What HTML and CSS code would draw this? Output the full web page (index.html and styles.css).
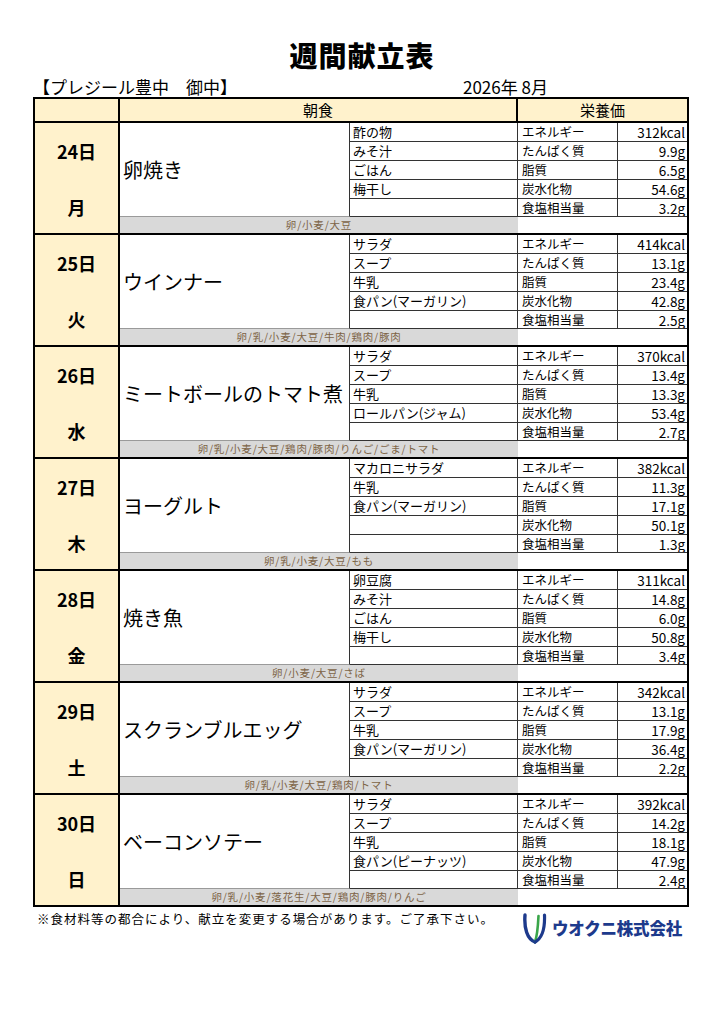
FILE: index.html
```html
<!DOCTYPE html>
<html lang="ja">
<head>
<meta charset="utf-8">
<title>週間献立表</title>
<link rel="stylesheet" href="styles.css">
</head>
<body>
<div class="page">
  <h1 class="title">週間献立表</h1>
  <div class="meta">
    <span class="client">【プレジール豊中　御中】</span>
    <span class="month">2026年 8月</span>
  </div>
  <div class="menu">
    <div class="head">
      <div class="h-date"></div>
      <div class="h-meal">朝食</div>
      <div class="h-nut">栄養価</div>
    </div>

    <div class="day">
      <div class="date"><span class="dnum">24日</span><span class="wday">月</span></div>
      <div class="main">卵焼き</div>
      <div class="side">酢の物</div><div class="nn">エネルギー</div><div class="nv">312kcal</div>
      <div class="side">みそ汁</div><div class="nn">たんぱく質</div><div class="nv">9.9g</div>
      <div class="side">ごはん</div><div class="nn">脂質</div><div class="nv">6.5g</div>
      <div class="side">梅干し</div><div class="nn">炭水化物</div><div class="nv">54.6g</div>
      <div class="side"></div><div class="nn">食塩相当量</div><div class="nv">3.2g</div>
      <div class="allergy">卵/小麦/大豆</div>
    </div>

    <div class="day">
      <div class="date"><span class="dnum">25日</span><span class="wday">火</span></div>
      <div class="main">ウインナー</div>
      <div class="side">サラダ</div><div class="nn">エネルギー</div><div class="nv">414kcal</div>
      <div class="side">スープ</div><div class="nn">たんぱく質</div><div class="nv">13.1g</div>
      <div class="side">牛乳</div><div class="nn">脂質</div><div class="nv">23.4g</div>
      <div class="side">食パン(マーガリン)</div><div class="nn">炭水化物</div><div class="nv">42.8g</div>
      <div class="side"></div><div class="nn">食塩相当量</div><div class="nv">2.5g</div>
      <div class="allergy">卵/乳/小麦/大豆/牛肉/鶏肉/豚肉</div>
    </div>

    <div class="day">
      <div class="date"><span class="dnum">26日</span><span class="wday">水</span></div>
      <div class="main">ミートボールのトマト煮</div>
      <div class="side">サラダ</div><div class="nn">エネルギー</div><div class="nv">370kcal</div>
      <div class="side">スープ</div><div class="nn">たんぱく質</div><div class="nv">13.4g</div>
      <div class="side">牛乳</div><div class="nn">脂質</div><div class="nv">13.3g</div>
      <div class="side">ロールパン(ジャム)</div><div class="nn">炭水化物</div><div class="nv">53.4g</div>
      <div class="side"></div><div class="nn">食塩相当量</div><div class="nv">2.7g</div>
      <div class="allergy">卵/乳/小麦/大豆/鶏肉/豚肉/りんご/ごま/トマト</div>
    </div>

    <div class="day">
      <div class="date"><span class="dnum">27日</span><span class="wday">木</span></div>
      <div class="main">ヨーグルト</div>
      <div class="side">マカロニサラダ</div><div class="nn">エネルギー</div><div class="nv">382kcal</div>
      <div class="side">牛乳</div><div class="nn">たんぱく質</div><div class="nv">11.3g</div>
      <div class="side">食パン(マーガリン)</div><div class="nn">脂質</div><div class="nv">17.1g</div>
      <div class="side"></div><div class="nn">炭水化物</div><div class="nv">50.1g</div>
      <div class="side"></div><div class="nn">食塩相当量</div><div class="nv">1.3g</div>
      <div class="allergy">卵/乳/小麦/大豆/もも</div>
    </div>

    <div class="day">
      <div class="date"><span class="dnum">28日</span><span class="wday">金</span></div>
      <div class="main">焼き魚</div>
      <div class="side">卵豆腐</div><div class="nn">エネルギー</div><div class="nv">311kcal</div>
      <div class="side">みそ汁</div><div class="nn">たんぱく質</div><div class="nv">14.8g</div>
      <div class="side">ごはん</div><div class="nn">脂質</div><div class="nv">6.0g</div>
      <div class="side">梅干し</div><div class="nn">炭水化物</div><div class="nv">50.8g</div>
      <div class="side"></div><div class="nn">食塩相当量</div><div class="nv">3.4g</div>
      <div class="allergy">卵/小麦/大豆/さば</div>
    </div>

    <div class="day">
      <div class="date"><span class="dnum">29日</span><span class="wday">土</span></div>
      <div class="main">スクランブルエッグ</div>
      <div class="side">サラダ</div><div class="nn">エネルギー</div><div class="nv">342kcal</div>
      <div class="side">スープ</div><div class="nn">たんぱく質</div><div class="nv">13.1g</div>
      <div class="side">牛乳</div><div class="nn">脂質</div><div class="nv">17.9g</div>
      <div class="side">食パン(マーガリン)</div><div class="nn">炭水化物</div><div class="nv">36.4g</div>
      <div class="side"></div><div class="nn">食塩相当量</div><div class="nv">2.2g</div>
      <div class="allergy">卵/乳/小麦/大豆/鶏肉/トマト</div>
    </div>

    <div class="day">
      <div class="date"><span class="dnum">30日</span><span class="wday">日</span></div>
      <div class="main">ベーコンソテー</div>
      <div class="side">サラダ</div><div class="nn">エネルギー</div><div class="nv">392kcal</div>
      <div class="side">スープ</div><div class="nn">たんぱく質</div><div class="nv">14.2g</div>
      <div class="side">牛乳</div><div class="nn">脂質</div><div class="nv">18.1g</div>
      <div class="side">食パン(ピーナッツ)</div><div class="nn">炭水化物</div><div class="nv">47.9g</div>
      <div class="side"></div><div class="nn">食塩相当量</div><div class="nv">2.4g</div>
      <div class="allergy">卵/乳/小麦/落花生/大豆/鶏肉/豚肉/りんご</div>
    </div>
  </div>

  <div class="footer">
    <p class="note">※食材料等の都合により、献立を変更する場合があります。ご了承下さい。</p>
    <div class="logo">
      <svg class="logo-mark" width="28" height="32" viewBox="0 0 28 32" aria-hidden="true">
        <path d="M4 3 C3 16 6 27 14 30" fill="none" stroke="#1d3a8c" stroke-width="3.4" stroke-linecap="round"/>
        <path d="M17.5 4 C17 14 16.5 23 14 30" fill="none" stroke="#3aa64a" stroke-width="2.6" stroke-linecap="round"/>
        <path d="M23.5 3 C24 16 21.5 26 14 30" fill="none" stroke="#1d3a8c" stroke-width="3.2" stroke-linecap="round"/>
      </svg>
      <span class="logo-text">ウオクニ株式会社</span>
    </div>
  </div>
</div>
</body>
</html>
```

FILE: styles.css
```css
* {
  box-sizing: border-box;
}

html, body {
  margin: 0;
  padding: 0;
  background: #ffffff;
}

body {
  font-family: "Noto Sans CJK JP", "Noto Sans", sans-serif;
  color: #000;
}

.page {
  width: 724px;
  padding-top: 38px;
}

.title {
  margin: 0;
  height: 34px;
  line-height: 34px;
  text-align: center;
  font-size: 28px;
  font-weight: 900;
  letter-spacing: 1px;
}

.meta {
  display: flex;
  align-items: flex-end;
  height: 25px;
  padding-left: 33px;
  font-size: 17px;
  line-height: 21px;
}

.client {
  width: 430px;
}

.month {
  font-size: 17px;
}

.menu {
  margin-left: 33px;
  width: 656px;
  border: 2px solid #000;
}

.head,
.day {
  display: grid;
  grid-template-columns: 85px 230px 168px 100px 1fr;
}

.head {
  height: 24px;
  border-bottom: 2px solid #000;
  background: #fff2cc;
  font-size: 15px;
  line-height: 22px;
}

.h-date {
  grid-column: 1;
  border-right: 2px solid #000;
}

.h-meal {
  grid-column: 2 / 4;
  text-align: center;
  border-right: 2px solid #000;
}

.h-nut {
  grid-column: 4 / 6;
  text-align: center;
}

.day {
  grid-template-rows: 19px 19px 19px 19px 18px 16px;
  border-bottom: 2px solid #000;
}

.day:last-child {
  border-bottom: none;
}

.day > div {
  min-width: 0;
  overflow: hidden;
  white-space: nowrap;
}

.date {
  grid-row: 1 / 7;
  grid-column: 1;
  background: #fff2cc;
  border-right: 2px solid #000;
  display: flex;
  flex-direction: column;
  align-items: center;
  padding-top: 17px;
  gap: 34px;
  font-size: 18px;
  font-weight: 700;
  line-height: 22px;
}

.main {
  grid-row: 1 / 6;
  grid-column: 2;
  border-right: 1px solid #333;
  border-bottom: 1px solid #9a9a9a;
  display: flex;
  align-items: center;
  padding-left: 3px;
  font-size: 20px;
}

.side {
  border-right: 1px solid #333;
  border-bottom: 1px solid #333;
  padding-left: 3px;
  font-size: 13px;
  line-height: 17px;
}

.nn {
  border-right: 1px solid #333;
  border-bottom: 1px solid #333;
  padding-left: 4px;
  padding-top: 1px;
  font-size: 12.5px;
  line-height: 16px;
}

.nv {
  border-bottom: 1px solid #333;
  text-align: right;
  padding-right: 2px;
  padding-top: 1px;
  font-size: 13.5px;
  line-height: 16px;
}

.allergy {
  grid-row: 6;
  grid-column: 2 / 4;
  background: #d9d9d9;
  text-align: center;
  color: #7d6446;
  font-size: 10.5px;
  letter-spacing: 0.8px;
  line-height: 16px;
}

.footer {
  display: flex;
  justify-content: space-between;
  align-items: flex-start;
  padding-left: 37px;
  padding-right: 42px;
  margin-top: 4px;
}

.note {
  margin: 0;
  font-size: 12.5px;
  letter-spacing: 1px;
  line-height: 16px;
}

.logo {
  display: flex;
  align-items: center;
  gap: 3px;
  margin-top: 1px;
}

.logo-mark {
  display: block;
}

.logo-text {
  color: #1d3a8c;
  font-weight: 900;
  font-size: 16.5px;
  line-height: 20px;
  letter-spacing: -0.2px;
}
```
